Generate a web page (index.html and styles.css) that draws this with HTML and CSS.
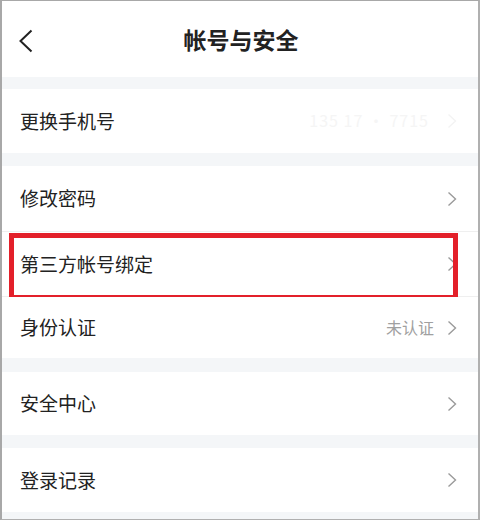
FILE: index.html
```html
<!DOCTYPE html>
<html lang="zh">
<head>
<meta charset="utf-8">
<title>帐号与安全</title>
<link rel="stylesheet" href="styles.css">
</head>
<body>
<div class="screen">
  <header class="topbar">
    <svg class="back" width="14" height="24" viewBox="0 0 14 24"><polyline points="12.5,1.5 1.5,12 12.5,22.5" fill="none" stroke="#222" stroke-width="2"/></svg>
    <h1 class="title">帐号与安全</h1>
  </header>
  <div class="band b12"></div>
  <div class="row h64">
    <span class="label">更换手机号</span>
    <span class="value faint">135 17 · 7715</span>
    <svg class="chev" width="10" height="16" viewBox="0 0 10 16"><polyline points="1.5,1.5 8.5,8 1.5,14.5" fill="none" stroke="#f3f3f3" stroke-width="1.4"/></svg>
  </div>
  <div class="band b13"></div>
  <div class="row h65">
    <span class="label">修改密码</span>
    <svg class="chev" width="10" height="16" viewBox="0 0 10 16"><polyline points="1.5,1.5 8.5,8 1.5,14.5" fill="none" stroke="#9a9a9a" stroke-width="1.4"/></svg>
  </div>
  <div class="divider"></div>
  <div class="row h64">
    <span class="label">第三方帐号绑定</span>
    <svg class="chev" width="10" height="16" viewBox="0 0 10 16"><polyline points="1.5,1.5 8.5,8 1.5,14.5" fill="none" stroke="#9a9a9a" stroke-width="1.4"/></svg>
    <div class="highlight"></div>
  </div>
  <div class="divider"></div>
  <div class="row h61">
    <span class="label">身份认证</span>
    <span class="value">未认证</span>
    <svg class="chev" width="10" height="16" viewBox="0 0 10 16"><polyline points="1.5,1.5 8.5,8 1.5,14.5" fill="none" stroke="#9a9a9a" stroke-width="1.4"/></svg>
  </div>
  <div class="band b14"></div>
  <div class="row h63">
    <span class="label">安全中心</span>
    <svg class="chev" width="10" height="16" viewBox="0 0 10 16"><polyline points="1.5,1.5 8.5,8 1.5,14.5" fill="none" stroke="#9a9a9a" stroke-width="1.4"/></svg>
  </div>
  <div class="band b13"></div>
  <div class="row h64">
    <span class="label">登录记录</span>
    <svg class="chev" width="10" height="16" viewBox="0 0 10 16"><polyline points="1.5,1.5 8.5,8 1.5,14.5" fill="none" stroke="#9a9a9a" stroke-width="1.4"/></svg>
  </div>
  <div class="band rest"></div>
</div>
</body>
</html>
```

FILE: styles.css
```css
* { box-sizing: border-box; }
html, body { margin: 0; padding: 0; background: #ffffff; }
body {
  width: 480px;
  height: 520px;
  overflow: hidden;
  font-family: "Noto Sans CJK SC", "Noto Sans", sans-serif;
  color: #222222;
}
.screen {
  width: 480px;
  height: 520px;
  border-top: 1px solid #a8a8a8;
  border-left: 2px solid #a8a8a8;
  border-right: 2px solid #b0b0b0;
  border-bottom: 1px solid #b0b0b0;
  display: flex;
  flex-direction: column;
  background: #ffffff;
}
.topbar {
  height: 76px;
  flex: none;
  display: flex;
  align-items: center;
  justify-content: center;
  position: relative;
}
.back {
  position: absolute;
  left: 17px;
  top: 28px;
}
.title {
  margin: 0 0 0 2px;
  font-size: 23px;
  font-weight: 700;
  color: #222222;
  line-height: 1;
}
.band { background: #f4f6f8; flex: none; }
.b12 { height: 12px; }
.b13 { height: 13px; }
.b14 { height: 14px; }
.rest { flex: 1; }
.divider { height: 1px; background: #efefef; flex: none; }
.row {
  flex: none;
  display: flex;
  align-items: center;
  padding: 0 21px 0 18px;
  position: relative;
  background: #ffffff;
}
.h61 { height: 61px; }
.h63 { height: 63px; }
.h64 { height: 64px; }
.h65 { height: 65px; }
.label {
  font-size: 19px;
  line-height: 1;
  color: #222222;
  flex: 1;
  position: relative;
  top: -1px;
}
.value {
  font-size: 16px;
  color: #a0a0a0;
  margin-right: 13px;
  line-height: 1;
  position: relative;
  top: -1px;
}
.value.faint {
  color: #f5f5f5;
  margin-right: 18px;
  letter-spacing: 1px;
}
.chev { flex: none; display: block; }
.highlight {
  position: absolute;
  left: 7px;
  top: 1px;
  width: 449px;
  height: 67px;
  border: 5px solid #e3202a;
  pointer-events: none;
}
```
